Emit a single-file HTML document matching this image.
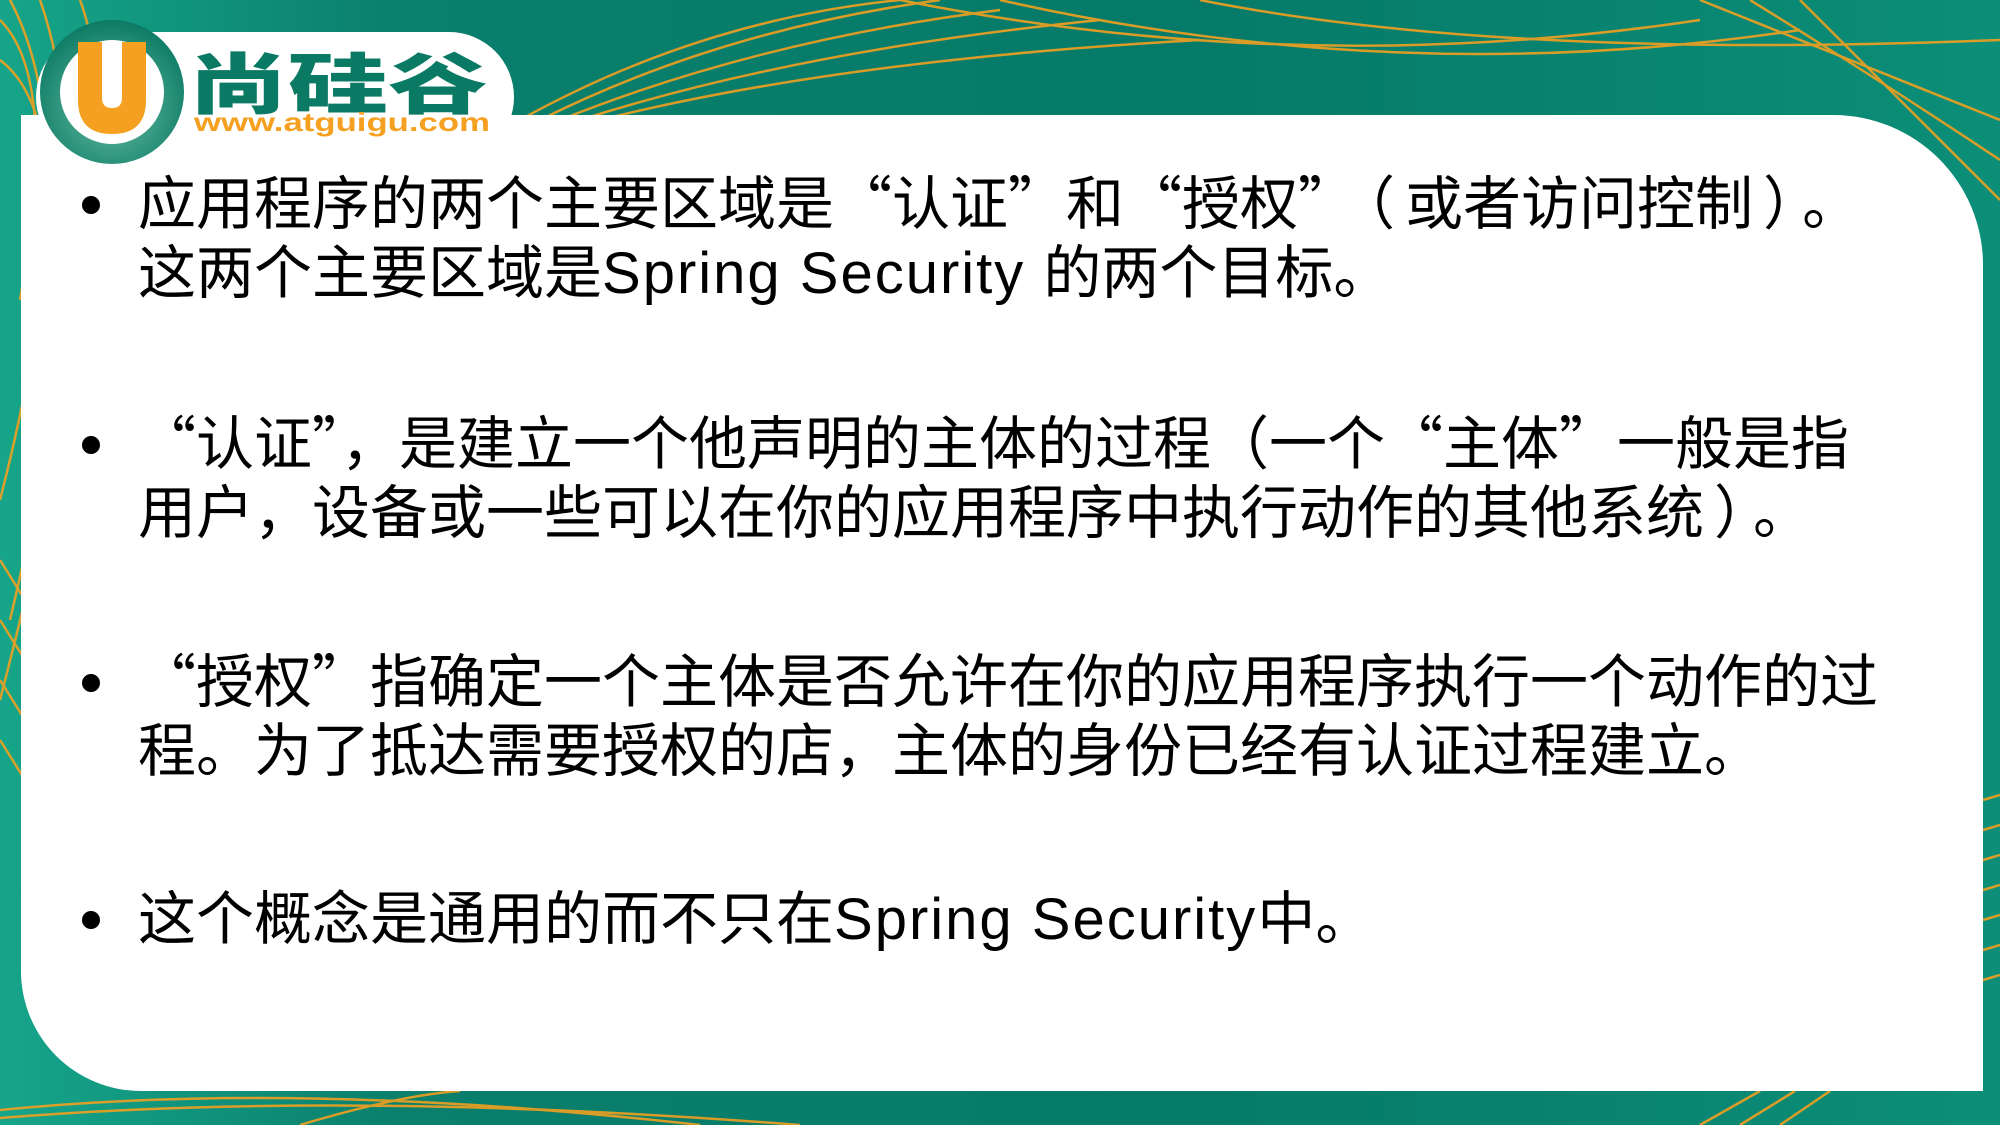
<!DOCTYPE html>
<html><head><meta charset="utf-8"><style>
html,body{margin:0;padding:0}
body{width:2000px;height:1125px;position:relative;overflow:hidden;background:linear-gradient(90deg,#16a58a 0%,#0a7f6c 20%,#057a68 60%,#0c8e78 100%);font-family:"Noto Sans CJK SC","Liberation Sans",sans-serif}
.panel{position:absolute;left:21px;top:115px;width:1962px;height:976px;background:#fff;border-radius:0 150px 0 120px}
.pill{position:absolute;left:36px;top:32px;width:478px;height:130px;background:#fff;border-radius:65px;z-index:2}
.logo{position:absolute;left:0;top:0;z-index:3}
.line{position:absolute;left:138px;font-size:58px;color:#000;white-space:nowrap;line-height:70px;font-feature-settings:"fwid"}
.l{font-family:"Liberation Sans",sans-serif;letter-spacing:2px;font-feature-settings:normal}
.p{margin:0 10px}
.b{position:absolute;left:82px;width:18px;height:18px;border-radius:50%;background:#000}
</style></head><body>
<svg width="2000" height="1125" style="position:absolute;left:0;top:0">
<g fill="none" stroke="#f0a020" stroke-width="2.5" opacity="0.9">
<path d="M0 20 Q60 80 20 300"/><path d="M0 60 Q80 120 30 400"/><path d="M10 0 Q90 150 0 500"/><path d="M40 0 Q110 200 10 620"/><path d="M80 0 Q140 160 0 700"/>
<path d="M0 560 L25 600"/><path d="M0 620 L25 660"/><path d="M0 680 L25 720"/><path d="M0 740 L25 780"/>
<path d="M520 120 Q700 20 900 0"/><path d="M540 120 Q720 30 940 0"/><path d="M560 120 Q760 40 1000 10"/><path d="M580 120 Q800 50 1100 20"/><path d="M600 120 Q840 60 1200 40"/>
<path d="M900 0 Q1300 80 1700 20"/><path d="M1000 0 Q1400 90 1800 30"/><path d="M1200 0 Q1500 60 2000 40"/>
<path d="M1700 0 Q1850 60 2000 120"/><path d="M1750 0 Q1880 80 2000 160"/><path d="M1800 0 Q1900 100 2000 200"/>
<path d="M1983 800 L2000 795"/><path d="M1983 830 L2000 825"/><path d="M1983 860 L2000 855"/><path d="M1983 890 L2000 885"/><path d="M1983 920 L2000 915"/><path d="M1983 950 L2000 945"/><path d="M1983 980 L2000 975"/>
<path d="M0 1110 Q300 1080 700 1125"/><path d="M0 1118 Q350 1090 800 1125"/><path d="M300 1125 Q400 1095 460 1091"/><path d="M1700 1125 L1760 1091"/><path d="M1740 1125 L1795 1091"/><path d="M1780 1125 L1830 1091"/>
</g></svg>
<div class="panel"></div>
<div class="pill"></div>
<svg class="logo" width="520" height="170">
<defs><radialGradient id="g" cx="50%" cy="60%" r="60%"><stop offset="0" stop-color="#6cc0a8"/><stop offset="1" stop-color="#0b7a64"/></radialGradient></defs>
<circle cx="112" cy="92" r="72" fill="url(#g)"/>
<circle cx="112" cy="92" r="52" fill="#fff"/>
<path d="M78 42 H102 V98 Q102 108 112 108 Q122 108 122 98 V42 H146 V100 Q146 134 112 134 Q78 134 78 100 Z" fill="#f5a020"/>
<text x="188" y="108" font-family="Noto Sans CJK SC,sans-serif" font-weight="900" font-size="66" fill="#0b7a64" textLength="300" lengthAdjust="spacingAndGlyphs">尚硅谷</text>
<text x="194" y="131" font-family="Liberation Sans,sans-serif" font-weight="bold" font-size="26" fill="#f5a020" textLength="296" lengthAdjust="spacingAndGlyphs">www.atguigu.com</text>
</svg>
<div class="b" style="top:196px"></div>
<div class="line" style="top:164px">应用程序的两个主要区域是“认证”和“授权”<span class="p">（</span>或者访问控制<span class="p">）</span>。</div>
<div class="line" style="top:233px">这两个主要区域是<span class="l">Spring Security </span>的两个目标。</div>
<div class="b" style="top:436px"></div>
<div class="line" style="top:404px">“认证”，是建立一个他声明的主体的过程（一个“主体”一般是指</div>
<div class="line" style="top:473px">用户，设备或一些可以在你的应用程序中执行动作的其他系统<span class="p">）</span>。</div>
<div class="b" style="top:674px"></div>
<div class="line" style="top:642px">“授权”指确定一个主体是否允许在你的应用程序执行一个动作的过</div>
<div class="line" style="top:711px">程。为了抵达需要授权的店，主体的身份已经有认证过程建立。</div>
<div class="b" style="top:911px"></div>
<div class="line" style="top:879px">这个概念是通用的而不只在<span class="l">Spring Security</span>中。</div>
</body></html>
